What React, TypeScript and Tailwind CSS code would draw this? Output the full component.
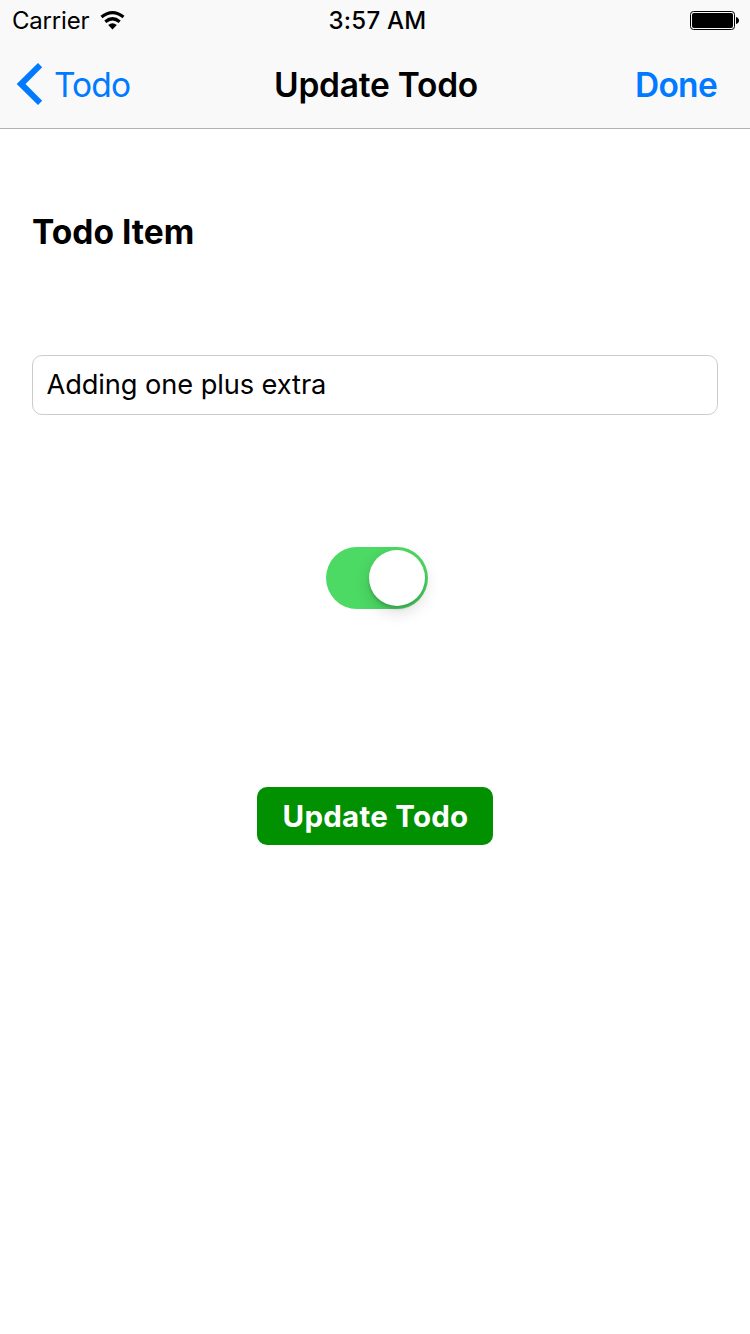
export default function App() {
  return (
    <div className="flex h-[1334px] w-[750px] flex-col bg-white font-['Inter',sans-serif] text-black">
      <header className="flex h-[129px] flex-col border-b border-[#b2b2b2] bg-[#f9f9f9]">
        <div className="grid h-10 grid-cols-3 items-center pt-[2px]">
          <div className="flex items-center pl-3">
            <span className="w-[78px] whitespace-nowrap text-[24px] leading-9 tracking-[-0.2px]">Carrier</span>
            <svg className="ml-[10px] h-[18px] w-[26px] overflow-visible" viewBox="0 0 26 18">
              <path d="M1.500 5Q12.500-3.800 23.500 5M5.300 9.700Q12.500 3.800 19.700 9.700" fill="none" stroke="#000" strokeWidth="3.2" />
              <path d="m12.500 17.500-4.300-4.400q4.300-3.600 8.600 0z" />
            </svg>
          </div>
          <span className="pl-[5px] text-center text-[24px] font-[550] tracking-[0.25px]">3:57 AM</span>
          <div className="flex justify-end pr-[11px]">
            <svg className="h-5 w-[49px]" viewBox="0 0 49 20">
              <rect x=".5" y=".5" width="44" height="18" rx="3" fill="none" stroke="#000" />
              <rect x="2" y="2" width="41" height="15" rx="2" />
              <path d="M46 6v7q3-1 3-3.500T46 6" />
            </svg>
          </div>
        </div>
        <nav className="grid h-[88px] grid-cols-3 items-center">
          <button className="flex items-center pl-4 text-[33.5px] tracking-[-0.9px] text-[#007aff]">
            <svg className="mr-[11px] h-[42px] w-[27px]" viewBox="0 0 27 42">
              <path d="M22 0 26.200 4.200 9.500 21 26.200 37.800 22 42 .7 21z" fill="currentColor" />
            </svg>
            <span className="pt-[2px]">Todo</span>
          </button>
          <h1 className="whitespace-nowrap pl-[2px] pt-[2px] text-center text-[33.5px] font-semibold tracking-[-0.25px]">Update Todo</h1>
          <button className="pr-8 pt-[2px] text-right text-[33.5px] font-semibold tracking-[-0.7px] text-[#007aff]"><span className="mr-px">Done</span></button>
        </nav>
      </header>
      <main className="flex flex-col items-center px-8">
        <h2 className="mt-[83px] h-10 self-start text-[33.5px] font-bold leading-10">Todo Item</h2>
        <input className="mt-[103px] h-[60px] w-full rounded-[10px] border border-[#ccc] px-[13.5px] pb-px text-[27.25px] tracking-[-0.1px]" defaultValue="Adding one plus extra" />
        <button role="switch" aria-checked="true" aria-label="Completed" className="ml-1 mt-[132px] flex h-[62px] w-[102px] items-center justify-end rounded-full bg-[#4cd964] pr-[3px]">
          <span className="size-14 rounded-full bg-white shadow-[0_6px_16px_rgba(0,0,0,0.15),0_3px_3px_rgba(0,0,0,0.15)]" />
        </button>
        <button className="mt-[178px] h-[58px] w-[236px] rounded-[10px] bg-[#009000] pl-px pt-px text-[29.5px] font-bold tracking-[0.25px] text-white">Update Todo</button>
      </main>
    </div>
  );
}
